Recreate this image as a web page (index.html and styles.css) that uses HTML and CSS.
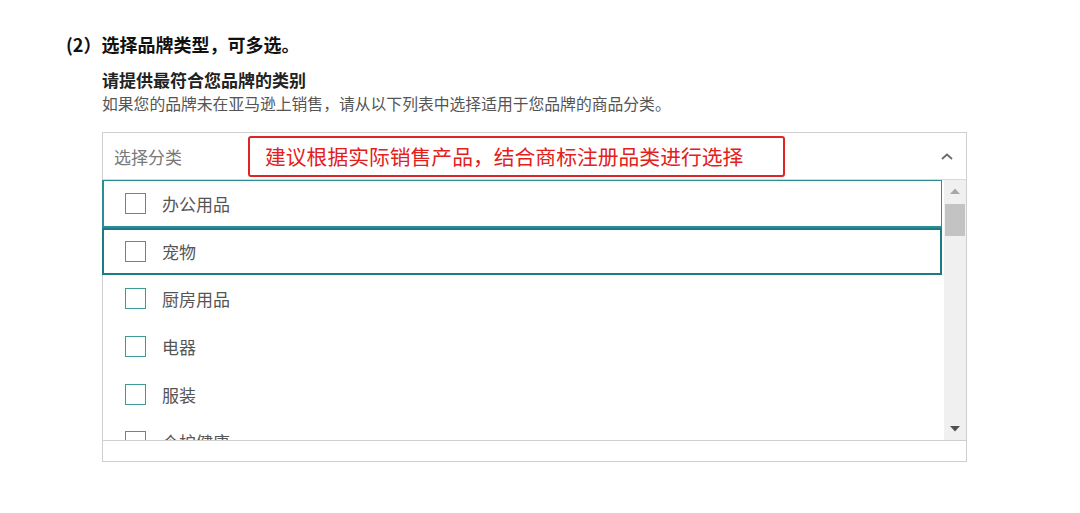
FILE: index.html
```html
<!DOCTYPE html>
<html lang="zh-CN">
<head>
  <meta charset="UTF-8" />
  <title>选择品牌类型</title>
  <link rel="stylesheet" href="styles.css">
</head>
<body>
  <div class="page">
    <h2 class="step">(2）选择品牌类型，可多选。</h2>

    <div class="section">
      <h3 class="label">请提供最符合您品牌的类别</h3>
      <p class="hint">如果您的品牌未在亚马逊上销售，请从以下列表中选择适用于您品牌的商品分类。</p>

      <div class="dropdown">
        <div class="dropdown-head">
          <span class="placeholder">选择分类</span>
          <span class="note">建议根据实际销售产品，结合商标注册品类进行选择</span>
          <svg class="chevron" width="14" height="9" viewBox="0 0 14 9">
            <path d="M2 7 L7 2.5 L12 7" fill="none" stroke="#6a6a6a" stroke-width="1.8"/>
          </svg>
        </div>

        <div class="list">
          <div class="items">
            <div class="item hover"><span class="box"></span>办公用品</div>
            <div class="item focus"><span class="box"></span>宠物</div>
            <div class="item"><span class="box"></span>厨房用品</div>
            <div class="item"><span class="box"></span>电器</div>
            <div class="item"><span class="box"></span>服装</div>
            <div class="item"><span class="box"></span>个护健康</div>
          </div>
          <div class="scrollbar">
            <svg class="arrow" width="12" height="8" viewBox="0 0 12 8"><path d="M1 7 L6 1.5 L11 7 Z" fill="#a8a8a8"/></svg>
            <div class="thumb"></div>
            <div class="track"></div>
            <svg class="arrow" width="12" height="8" viewBox="0 0 12 8"><path d="M1 1 L6 6.5 L11 1 Z" fill="#505050"/></svg>
          </div>
        </div>
        <div class="dropdown-foot"></div>
      </div>
    </div>
  </div>
</body>
</html>
```

FILE: styles.css
```css
body {
  margin: 0;
  background: #fff;
  font-family: "Noto Sans CJK SC", "Noto Sans", sans-serif;
}
.page {
  padding: 31px 0 0 66px;
}
.step {
  margin: 0;
  font-size: 18px;
  font-weight: 700;
  line-height: 26px;
  color: #111;
}
.section {
  margin-left: 36px;
  margin-top: 11px;
  width: 865px;
}
.label {
  margin: 0;
  font-size: 17px;
  font-weight: 700;
  line-height: 24px;
  color: #222;
}
.hint {
  margin: 0;
  font-size: 15.8px;
  line-height: 24px;
  color: #555;
}
.dropdown {
  margin-top: 16px;
  border: 1px solid #cfcfcf;
  box-sizing: border-box;
}
.dropdown-head {
  height: 46px;
  display: flex;
  align-items: center;
  padding: 0 12px 0 11px;
  border-bottom: 1px solid #d8d8d8;
}
.placeholder {
  font-size: 17px;
  color: #7a7a7a;
}
.note {
  margin-left: 66px;
  height: 41px;
  width: 537px;
  box-sizing: border-box;
  border: 2px solid #e02424;
  border-radius: 3px;
  padding-left: 15px;
  display: flex;
  align-items: center;
  font-size: 20.8px;
  color: #e3201b;
}
.chevron {
  margin-left: auto;
}
.list {
  display: flex;
  height: 260px;
  border-bottom: 1px solid #cfcfcf;
}
.items {
  flex: 1;
  overflow: hidden;
  margin-left: -1px;
}
.item {
  height: 47.6px;
  box-sizing: border-box;
  display: flex;
  align-items: center;
  padding-left: 21px;
  font-size: 17px;
  color: #555;
  border: 2px solid transparent;
}
.item.hover {
  border-color: #2b8d96;
  border-width: 1.5px 1.5px 2px 2px;
}
.item.focus {
  border-color: #1b7c86;
}
.box {
  width: 21px;
  height: 21px;
  box-sizing: border-box;
  border: 1.5px solid #3c9a9c;
  margin-right: 16px;
  flex: none;
}
.scrollbar {
  width: 22px;
  margin-left: 2px;
  background: #f0f0f0;
  display: flex;
  flex-direction: column;
  align-items: center;
}
.arrow {
  margin: 7px 0;
}
.thumb {
  width: 20px;
  height: 32px;
  background: #c3c3c3;
  margin-top: 2px;
}
.track {
  flex: 1;
}
.dropdown-foot {
  height: 20px;
}
```
